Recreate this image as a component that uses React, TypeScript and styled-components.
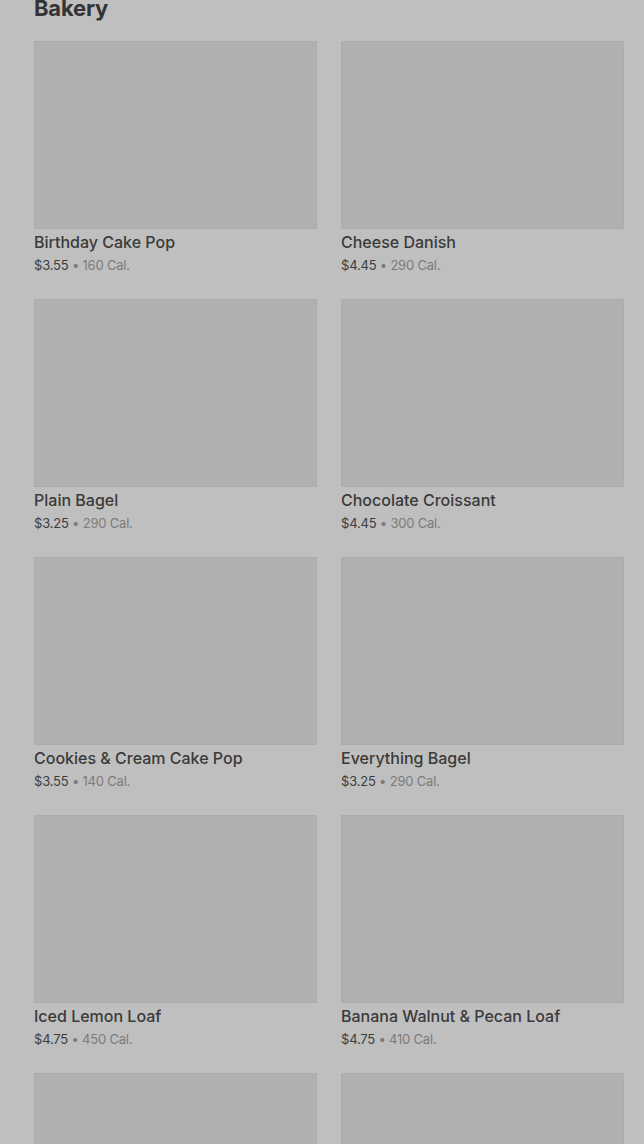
import { createGlobalStyle, styled } from "styled-components";

type Item = {
  name?: string;
  price?: string;
  cal?: number;
};

const items: Item[] = [
  { name: "Birthday Cake Pop", price: "$3.55", cal: 160 },
  { name: "Cheese Danish", price: "$4.45", cal: 290 },
  { name: "Plain Bagel", price: "$3.25", cal: 290 },
  { name: "Chocolate Croissant", price: "$4.45", cal: 300 },
  { name: "Cookies & Cream Cake Pop", price: "$3.55", cal: 140 },
  { name: "Everything Bagel", price: "$3.25", cal: 290 },
  { name: "Iced Lemon Loaf", price: "$4.75", cal: 450 },
  { name: "Banana Walnut & Pecan Loaf", price: "$4.75", cal: 410 },
  {},
  {},
];

const GlobalStyle = createGlobalStyle`
  html, body {
    margin: 0;
    padding: 0;
    background: #bfbfbf;
    overflow: hidden;
  }
  body {
    font-family: Inter, "Noto Sans", Arial, sans-serif;
  }
`;

const App: React.FC = () => {
  return (
    <>
      <GlobalStyle />
      <Page>
        <Title>Bakery</Title>
        <Grid>
          {items.map((item, i) => (
            <Card key={i}>
              <Photo />
              {item.name && (
                <>
                  <Name>{item.name}</Name>
                  <Meta>
                    <span className="price">{item.price}</span>
                    <span className="dot"> • </span>
                    <span className="cal">{item.cal} Cal.</span>
                  </Meta>
                </>
              )}
            </Card>
          ))}
        </Grid>
      </Page>
    </>
  );
};
export default App;

const Page = styled.div`
  padding: 0 20px 0 34px;
  height: 1144px;
  overflow: hidden;
`;

const Title = styled.h2`
  margin: -6px 0 19px;
  font-size: 22px;
  line-height: 28px;
  font-weight: 700;
  color: #333333;
  letter-spacing: -0.2px;
`;

const Grid = styled.div`
  display: grid;
  grid-template-columns: 283px 283px;
  column-gap: 24px;
  row-gap: 26px;
`;

const Card = styled.div`
  display: flex;
  flex-direction: column;
`;

const Photo = styled.div`
  height: 188px;
  background: #b0b0b0;
  box-shadow: inset 0 0 0 1px #acacac;
  margin-bottom: 3px;
`;

const Name = styled.div`
  font-size: 16px;
  line-height: 20px;
  font-weight: 500;
  color: #3a3a3a;
`;

const Meta = styled.div`
  margin-top: 5px;
  font-size: 13px;
  line-height: 16px;
  letter-spacing: -0.2px;
  .price {
    color: #3d3d3d;
  }
  .dot,
  .cal {
    color: #7c7c7c;
  }
`;
